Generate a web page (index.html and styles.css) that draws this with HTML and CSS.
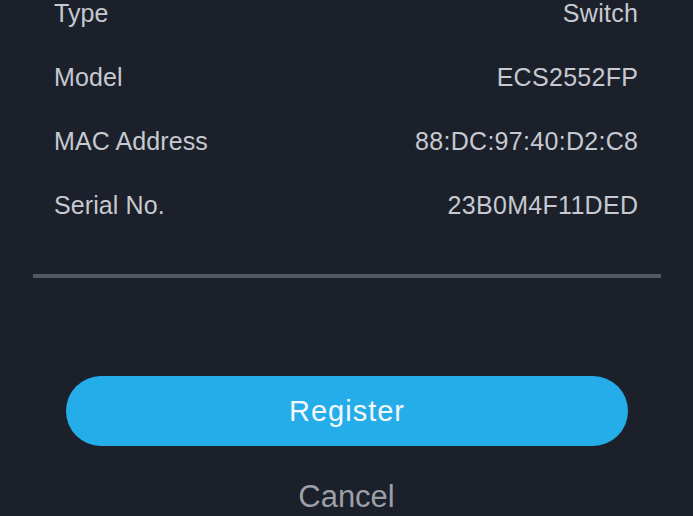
FILE: index.html
```html
<!DOCTYPE html>
<html lang="en">
<head>
<meta charset="UTF-8">
<meta name="viewport" content="width=device-width, initial-scale=1.0">
<title>Device Registration</title>
<link rel="stylesheet" href="styles.css">
</head>
<body>
<div id="device">
    <div class="details">
        <div class="row"><span class="label">Type</span><span class="value">Switch</span></div>
        <div class="row"><span class="label">Model</span><span class="value">ECS2552FP</span></div>
        <div class="row"><span class="label">MAC Address</span><span class="value">88:DC:97:40:D2:C8</span></div>
        <div class="row"><span class="label">Serial No.</span><span class="value">23B0M4F11DED</span></div>
    </div>
    <hr class="divider">
    <div class="actions">
        <button type="button" class="register">Register</button>
        <button type="button" class="cancel">Cancel</button>
    </div>
</div>
</body>
</html>
```

FILE: styles.css
```css
body {
    font-family: "Liberation Sans", Arial, sans-serif;
    background-color: #1b202a;
    color: #c6c9d0;
    margin: 0;
    height: 516px;
    overflow: hidden;
}

#device {
    width: 693px;
}

.details {
    margin-top: -19px;
    padding: 0 55px 0 54px;
}

.row {
    display: flex;
    justify-content: space-between;
    align-items: center;
    height: 64px;
    font-size: 25px;
    letter-spacing: 0.1px;
}

.value {
    letter-spacing: 0.3px;
    margin-right: -0.3px;
}

.divider {
    margin: 37px 32px 0 33px;
    border: none;
    height: 4px;
    background-color: #535761;
}

.actions {
    display: flex;
    flex-direction: column;
    align-items: center;
    padding-top: 98px;
}

button {
    font-family: "Liberation Sans", Arial, sans-serif;
    border: none;
    cursor: pointer;
}

.register {
    width: 562px;
    height: 70px;
    margin-left: 1px;
    border-radius: 35px;
    background-color: #24ade9;
    color: #f4f8fc;
    font-size: 29px;
    letter-spacing: 1px;
}

.cancel {
    margin-top: 31px;
    background: none;
    color: #9c9fa7;
    font-size: 31px;
    padding: 0;
    line-height: 40px;
}
```
